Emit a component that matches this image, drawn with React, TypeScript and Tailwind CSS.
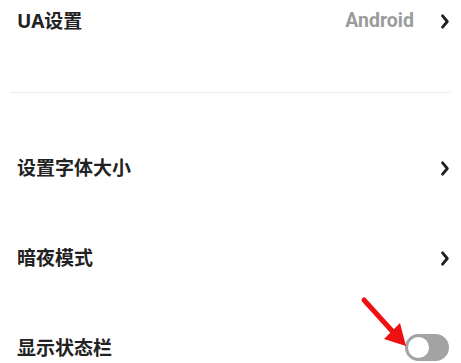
import React from "react";

const Chevron = () => (
  <svg width="8" height="15" viewBox="0 0 8 15" className="shrink-0">
    <polyline points="1.6,1.8 6.3,7.5 1.6,13.2" fill="none" stroke="#1f1f1f" strokeWidth="2.8" strokeLinecap="round" strokeLinejoin="round" />
  </svg>
);

const font = { fontFamily: '"Noto Sans", "Noto Sans CJK SC", sans-serif' };

export default function App() {
  return (
    <div className="relative w-[461px] h-[363px] overflow-hidden bg-white" style={font}>
      <div className="flex flex-col">
        <div className="h-[42px] flex items-center pl-[17px] pr-[12px]">
          <span className="text-[19px] font-bold text-[#222222] leading-none">UA设置</span>
          <span className="ml-auto text-[19.5px] font-bold text-[#9b9b9b] leading-none font-['Roboto',sans-serif]">Android</span>
          <div className="ml-[27px]"><Chevron /></div>
        </div>
        <div className="h-[50px]" />
        <div className="mx-[10px] h-px bg-[#ebebeb]" />
        <div className="h-[30px]" />
        <div className="h-[90px] flex items-center pl-[17px] pr-[12px]">
          <span className="text-[19px] font-bold text-[#222222] leading-none">设置字体大小</span>
          <div className="ml-auto"><Chevron /></div>
        </div>
        <div className="h-[90px] flex items-center pl-[17px] pr-[12px]">
          <span className="text-[19px] font-bold text-[#222222] leading-none">暗夜模式</span>
          <div className="ml-auto"><Chevron /></div>
        </div>
        <div className="h-[90px] flex items-center pl-[17px] pr-[12px]">
          <span className="text-[19px] font-bold text-[#222222] leading-none">显示状态栏</span>
          <div className="ml-auto w-[44px] h-[27px] rounded-full bg-[#a3a3a3] flex items-center pl-[3px] -translate-y-[1px]">
            <div className="w-[21px] h-[21px] rounded-full bg-white" />
          </div>
        </div>
      </div>
      <svg className="absolute left-0 top-0 pointer-events-none" width="461" height="363" viewBox="0 0 461 363">
        <line x1="364" y1="300" x2="393" y2="332" stroke="#ee1111" strokeWidth="5" strokeLinecap="round" />
        <polygon points="406,346 384,339 400,323" fill="#ee1111" />
      </svg>
    </div>
  );
}
